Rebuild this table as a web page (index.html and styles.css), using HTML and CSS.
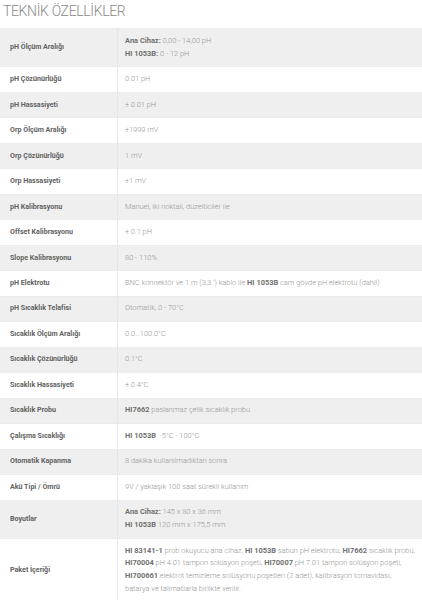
FILE: index.html
```html
<!DOCTYPE html>
<html lang="tr">
<head>
<meta charset="utf-8">
<title>Teknik Özellikler</title>
<link rel="stylesheet" href="styles.css">
</head>
<body>
<div class="page">
  <h2 class="title">TEKNİK ÖZELLİKLER</h2>
  <table class="specs">
    <tbody>
      <tr><th>pH Ölçüm Aralığı</th><td><b>Ana Cihaz:</b> 0,00 - 14,00 pH<br><b>HI 1053B:</b> 0 - 12 pH</td></tr>
      <tr><th>pH Çözünürlüğü</th><td>0.01 pH</td></tr>
      <tr><th>pH Hassasiyeti</th><td>± 0.01 pH</td></tr>
      <tr><th>Orp Ölçüm Aralığı</th><td>±1999 mV</td></tr>
      <tr><th>Orp Çözünürlüğü</th><td>1 mV</td></tr>
      <tr><th>Orp Hassasiyeti</th><td>±1 mV</td></tr>
      <tr><th>pH Kalibrasyonu</th><td>Manuel, iki noktalı, düzelticiler ile</td></tr>
      <tr><th>Offset Kalibrasyonu</th><td>± 0.1 pH</td></tr>
      <tr><th>Slope Kalibrasyonu</th><td>80 - 110%</td></tr>
      <tr><th>pH Elektrotu</th><td>BNC konnektör ve 1 m (3,3 ') kablo ile <b>HI 1053B</b> cam gövde pH elektrotu (dahil)</td></tr>
      <tr><th>pH Sıcaklık Telafisi</th><td>Otomatik, 0 - 70°C</td></tr>
      <tr><th>Sıcaklık Ölçüm Aralığı</th><td>0.0…100.0°C</td></tr>
      <tr><th>Sıcaklık Çözünürlüğü</th><td>0.1°C</td></tr>
      <tr><th>Sıcaklık Hassasiyeti</th><td>± 0.4°C</td></tr>
      <tr><th>Sıcaklık Probu</th><td><b>HI7662</b> paslanmaz çelik sıcaklık probu</td></tr>
      <tr><th>Çalışma Sıcaklığı</th><td><b>HI 1053B</b> &nbsp;-5°C - 100°C</td></tr>
      <tr><th>Otomatik Kapanma</th><td>8 dakika kullanılmadıktan sonra</td></tr>
      <tr><th>Akü Tipi / Ömrü</th><td>9V / yaklaşık 100 saat sürekli kullanım</td></tr>
      <tr><th>Boyutlar</th><td><b>Ana Cihaz:</b> 145 x 80 x 36 mm<br><b>HI 1053B</b> 120 mm x 175,5 mm</td></tr>
      <tr><th>Paket İçeriği</th><td><b>HI 83141-1</b> prob okuyucu ana cihaz, <b>HI 1053B</b> sabun pH elektrotu, <b>HI7662</b> sıcaklık probu,<br><b>HI70004</b> pH 4.01 tampon solüsyon poşeti, <b>HI70007</b> pH 7.01 tampon solüsyon poşeti,<br><b>HI700661</b> elektrot temizleme solüsyonu poşetleri (2 adet), kalibrasyon tornavidası,<br>batarya ve talimatlarla birlikte verilir.</td></tr>
    </tbody>
  </table>
</div>
</body>
</html>
```

FILE: styles.css
```css
html, body {
  margin: 0;
  padding: 0;
  background: #ffffff;
}

.page {
  font-family: Roboto, "Liberation Sans", sans-serif;
  width: 422px;
}

.title {
  margin: 0;
  padding: 2px 0 0 3px;
  height: 28px;
  box-sizing: border-box;
  font-size: 14px;
  line-height: 18px;
  font-weight: 300;
  color: #8a8a8a;
  letter-spacing: -0.35px;
}

.specs {
  width: 422px;
  border-collapse: collapse;
  font-size: 7.45px;
  line-height: 12.8px;
}

.specs tr {
  border-top: 1px solid #ebebeb;
}

.specs tr:nth-child(odd) {
  background: #efefef;
}

.specs th {
  width: 107px;
  padding: 5.85px 0 5.85px 10px;
  text-align: left;
  vertical-align: middle;
  font-weight: 700;
  font-size: 7.1px;
  color: #626262;
}

.specs td {
  padding: 5.85px 1px 5.85px 7px;
  border-left: 1px solid #e6e6e6;
  vertical-align: middle;
  font-weight: 300;
  color: #959595;
  white-space: nowrap;
}

.specs td b {
  font-weight: 700;
  color: #707070;
}
```
